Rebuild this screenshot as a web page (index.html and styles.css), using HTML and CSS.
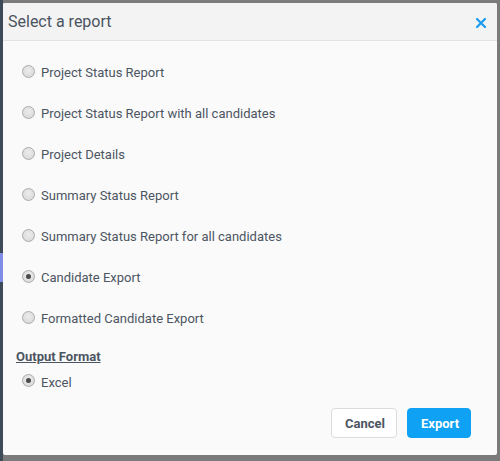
FILE: index.html
```html
<!DOCTYPE html>
<html>
<head>
<meta charset="utf-8">
<link rel="stylesheet" href="styles.css">
</head>
<body>
<div class="backdrop">
  <div class="modal">
    <div class="modal-header">
      <span class="title">Select a report</span>
      <span class="close">
        <svg width="10" height="10" viewBox="0 0 10 10"><path d="M1 1 L9 9 M9 1 L1 9" stroke="#1a9cf0" stroke-width="2.2" stroke-linecap="square"/></svg>
      </span>
    </div>
    <div class="modal-body">
      <label class="row"><span class="radio"></span><span class="label">Project Status Report</span></label>
      <label class="row"><span class="radio"></span><span class="label">Project Status Report with all candidates</span></label>
      <label class="row"><span class="radio"></span><span class="label">Project Details</span></label>
      <label class="row"><span class="radio"></span><span class="label">Summary Status Report</span></label>
      <label class="row"><span class="radio"></span><span class="label">Summary Status Report for all candidates</span></label>
      <label class="row"><span class="radio checked"></span><span class="label">Candidate Export</span></label>
      <label class="row"><span class="radio"></span><span class="label">Formatted Candidate Export</span></label>
      <div class="section-title">Output Format</div>
      <label class="row small"><span class="radio checked"></span><span class="label">Excel</span></label>
      <div class="actions">
        <button class="btn btn-cancel">Cancel</button>
        <button class="btn btn-export">Export</button>
      </div>
    </div>
  </div>
</div>
</body>
</html>
```

FILE: styles.css
```css
html, body {
  margin: 0;
  padding: 0;
}
body {
  width: 500px;
  height: 461px;
  overflow: hidden;
  font-family: Roboto, "Liberation Sans", sans-serif;
  background:
    linear-gradient(to bottom, transparent 253px, #7f8de6 253px, #7f8de6 282px, transparent 282px) 0 0 / 3px 100% no-repeat,
    linear-gradient(#3f4a59, #3f4a59) 0 0 / 3px 100% no-repeat,
    #7b7b7b;
}
.backdrop {
  padding: 3px 3px 6px 3px;
}
.modal {
  width: 494px;
  height: 452px;
  background: #fafafa;
  border-radius: 2px;
  display: flex;
  flex-direction: column;
}
.modal-header {
  height: 37px;
  background: #f3f3f3;
  border-bottom: 1px solid #e3e3e3;
  display: flex;
  align-items: center;
  justify-content: space-between;
  padding: 0 11px 0 5px;
  border-radius: 2px 2px 0 0;
}
.title {
  font-size: 16px;
  color: #4b5461;
}
.close {
  display: flex;
  width: 10px;
  height: 10px;
  margin-top: 2px;
}
.modal-body {
  padding: 11px 13px 0 13px;
  display: flex;
  flex-direction: column;
}
.row {
  height: 41px;
  display: flex;
  align-items: center;
  padding-left: 6px;
  color: #4c5562;
  font-size: 13px;
}
.row.small {
  height: 34px;
}
.radio {
  width: 11px;
  height: 11px;
  border-radius: 50%;
  border: 1px solid #ababab;
  background: radial-gradient(circle at 50% 40%, #ececec 0%, #dcdcdc 70%, #cfcfcf 100%);
  box-sizing: content-box;
  flex: none;
  margin-right: 6px;
  margin-top: -3px;
  position: relative;
}
.radio.checked::after {
  content: "";
  position: absolute;
  left: 3px;
  top: 3px;
  width: 5px;
  height: 5px;
  border-radius: 50%;
  background: #4a4a4a;
}
.section-title {
  margin-top: 10px;
  padding-left: 0;
  font-size: 13px;
  font-weight: 700;
  color: #4c5562;
  text-decoration: underline;
  line-height: 16px;
}
.actions {
  display: flex;
  justify-content: flex-end;
  gap: 10px;
  margin-top: 9px;
  padding-right: 13px;
}
.btn {
  height: 30px;
  border-radius: 4px;
  font-family: Roboto, "Liberation Sans", sans-serif;
  font-size: 13px;
  font-weight: 700;
  padding: 0 13px;
  cursor: pointer;
}
.btn-cancel {
  background: #ffffff;
  border: 1px solid #dcdcdc;
  color: #4c5562;
  width: 66px;
}
.btn-export {
  background: #0ea1f4;
  border: 1px solid #0ea1f4;
  color: #ffffff;
  width: 64px;
}
```
